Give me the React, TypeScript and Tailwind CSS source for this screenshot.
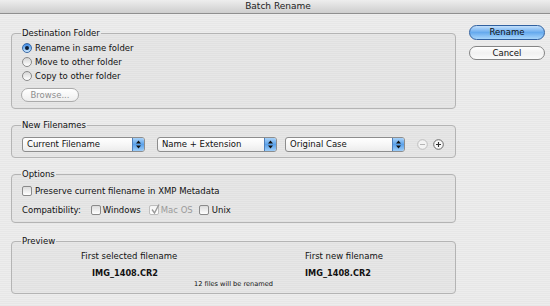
import React from "react";

const Radio = ({ checked }: { checked?: boolean }) =>
  checked ? (
    <span className="ml-[1px] flex h-[10px] w-[10px] items-center justify-center rounded-full border border-[#3a6aa6] bg-linear-to-b from-[#3b86e3] via-[#7fbaf4] to-[#cfe7fd]">
      <span className="h-[4px] w-[4px] rounded-full bg-[#0f1f36]" />
    </span>
  ) : (
    <span className="ml-[1px] h-[10px] w-[10px] rounded-full border border-[#8a8a8a] bg-linear-to-b from-[#d6d6d6] to-white" />
  );

const Checkbox = ({ checked, disabled }: { checked?: boolean; disabled?: boolean }) => (
  <span
    className={
      disabled
        ? "relative h-[10px] w-[10px] rounded-[2px] border border-[#bdbdbd] bg-linear-to-b from-[#f4f4f4] to-white"
        : "relative h-[10px] w-[10px] rounded-[2px] border border-[#8a8a8a] bg-linear-to-b from-[#dcdcdc] to-white"
    }
  >
    {checked && (
      <svg className="absolute -top-[2px] left-[1px]" width="9" height="10" viewBox="0 0 9 10">
        <path d="M1 5.5 L3.5 9 L8 0.5" fill="none" stroke="#9a9a9a" strokeWidth="1.4" />
      </svg>
    )}
  </span>
);

const Popup = ({ label, className }: { label: string; className: string }) => (
  <div className={`flex h-[15px] items-stretch overflow-hidden rounded-[3px] border border-[#8d8d8d] bg-linear-to-b from-white via-[#f7f7f7] to-[#ececec] ${className}`}>
    <span className="flex flex-1 items-center pl-[4px] leading-none">{label}</span>
    <span className="flex w-[12px] items-center justify-center border-l border-[#4f7fba] bg-linear-to-b from-[#a9d2f8] via-[#5aa1ea] to-[#9dcdf8]">
      <svg width="5" height="9" viewBox="0 0 5 9">
        <path d="M0 3.6 L2.5 0.4 L5 3.6 Z M0 5.4 L2.5 8.6 L5 5.4 Z" fill="#111" />
      </svg>
    </span>
  </div>
);

const Group = ({ title, className, children }: { title: string; className: string; children: React.ReactNode }) => (
  <fieldset className={`rounded-[4px] border border-[#b4b4b4] bg-black/[0.025] px-[9px] ${className}`}>
    <legend className="px-[1px] leading-[10px]">{title}</legend>
    {children}
  </fieldset>
);

export default function App() {
  return (
    <div className="h-[306px] w-[550px] overflow-hidden bg-[image:repeating-linear-gradient(180deg,#ededed_0px,#ededed_1px,#e7e7e7_1px,#e7e7e7_2px)] font-['DejaVu_Sans',sans-serif] text-[8.5px] text-[#111]">
      {/* Title bar */}
      <div className="flex h-[14px] items-center justify-center border-b border-[#8e8e8e] bg-linear-to-b from-[#eeeeee] to-[#cdcdcd] text-[9px] leading-none text-[#222]">
        <span className="ml-[6px]">Batch Rename</span>
      </div>

      <div className="flex items-start pl-[11px] pt-[11px]">
        <div className="mt-[3px] flex w-[445px] flex-col">
          {/* Destination Folder */}
          <Group title="Destination Folder" className="pb-[6px] pt-[3px]">
            <div className="flex h-[14px] items-center gap-[3px]">
              <Radio checked />
              <span>Rename in same folder</span>
            </div>
            <div className="flex h-[14px] items-center gap-[3px]">
              <Radio />
              <span>Move to other folder</span>
            </div>
            <div className="flex h-[14px] items-center gap-[3px]">
              <Radio />
              <span>Copy to other folder</span>
            </div>
            <div className="mt-[5px] flex h-[14px] w-[58px] items-center justify-center rounded-full border border-[#ababab] bg-linear-to-b from-white to-[#eeeeee] text-[#8e8e8e]">
              Browse...
            </div>
          </Group>

          {/* New Filenames */}
          <Group title="New Filenames" className="mt-[11px] pb-[5px] pt-[7px]">
            <div className="flex items-center">
              <Popup label="Current Filename" className="ml-[1px] w-[123px]" />
              <Popup label="Name + Extension" className="ml-[12px] w-[120px]" />
              <Popup label="Original Case" className="ml-[8px] w-[120px]" />
              <svg className="ml-[12px]" width="11" height="11" viewBox="0 0 11 11">
                <circle cx="5.5" cy="5.5" r="4.8" fill="#f3f3f3" stroke="#bdbdbd" />
                <path d="M3 5.5 H8" stroke="#b5b5b5" strokeWidth="1" />
              </svg>
              <svg className="ml-[5px]" width="11" height="11" viewBox="0 0 11 11">
                <circle cx="5.5" cy="5.5" r="4.8" fill="#f8f8f8" stroke="#6a6a6a" />
                <path d="M3 5.5 H8 M5.5 3 V8" stroke="#333" strokeWidth="1.1" />
              </svg>
            </div>
          </Group>

          {/* Options */}
          <Group title="Options" className="mt-[11px] pb-[5px] pt-[5px]">
            <div className="flex h-[14px] items-center gap-[3px]">
              <span className="ml-[1px] flex">
                <Checkbox />
              </span>
              <span>Preserve current filename in XMP Metadata</span>
            </div>
            <div className="mt-[5px] flex h-[14px] items-center">
              <span className="ml-[1px]">Compatibility:</span>
              <span className="ml-[10px] flex">
                <Checkbox />
              </span>
              <span className="ml-[2px]">Windows</span>
              <span className="ml-[8px] flex">
                <Checkbox checked disabled />
              </span>
              <span className="ml-[2px] text-[#9b9b9b]">Mac OS</span>
              <span className="ml-[6px] flex">
                <Checkbox />
              </span>
              <span className="ml-[3px]">Unix</span>
            </div>
          </Group>

          {/* Preview */}
          <Group title="Preview" className="mt-[13px] pb-[4px] pt-[4px]">
            <div className="flex">
              <div className="ml-[60px] flex w-[224px] flex-col">
                <span className="leading-[12px]">First selected filename</span>
                <span className="mt-[5px] pl-[11px] text-[8.2px] font-bold leading-[12px]">IMG_1408.CR2</span>
              </div>
              <div className="flex flex-col">
                <span className="leading-[12px]">First new filename</span>
                <span className="mt-[5px] text-[8.2px] font-bold leading-[12px]">IMG_1408.CR2</span>
              </div>
            </div>
            <div className="mt-[1px] text-center text-[6.6px] leading-[9px]">12 files will be renamed</div>
          </Group>
        </div>

        {/* Buttons */}
        <div className="ml-[13px] flex w-[76px] flex-col">
          <div className="flex h-[15px] items-center justify-center rounded-full border border-[#30609f] bg-linear-to-b from-[#c3e0fb] via-[#66aaee] to-[#a8d6fb] leading-none">
            Rename
          </div>
          <div className="mt-[6px] flex h-[14px] items-center justify-center rounded-full border border-[#858585] bg-linear-to-b from-white via-[#f1f1f1] to-[#fbfbfb] leading-none">
            Cancel
          </div>
        </div>
      </div>
    </div>
  );
}
